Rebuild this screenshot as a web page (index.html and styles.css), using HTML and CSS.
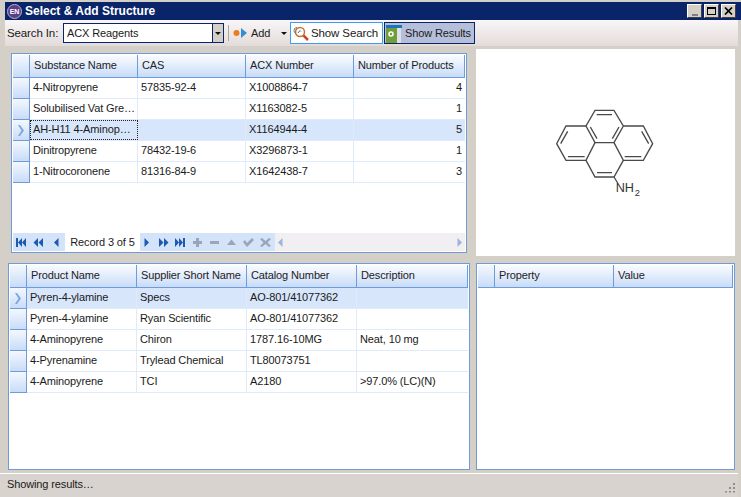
FILE: index.html
```html
<!DOCTYPE html>
<html lang="en">
<head>
<meta charset="UTF-8">
<title>Select &amp; Add Structure</title>
<link rel="stylesheet" href="styles.css">
</head>
<body>
<svg class="defs" width="0" height="0">
  <symbol id="first" viewBox="0 0 11 9"><path d="M1 0h2v9H1zM7 0v9L3 4.500zM11 0v9L7 4.500z"/></symbol>
  <symbol id="prevpage" viewBox="0 0 11 9"><path d="M5 0v9L.5 4.500zM10 0v9L5.500 4.500z"/></symbol>
  <symbol id="prev" viewBox="0 0 11 9"><path d="M7.500 0v9L3 4.500z"/></symbol>
  <symbol id="next" viewBox="0 0 11 9"><path d="M3.500 0v9L8 4.500z"/></symbol>
  <symbol id="nextpage" viewBox="0 0 11 9"><path d="M1 0v9l4.500-4.500zM6 0v9l4.500-4.500z"/></symbol>
  <symbol id="last" viewBox="0 0 11 9"><path d="M0 0v9l4-4.500zM4 0v9l4-4.500zM8 0h2v9H8z"/></symbol>
  <symbol id="plus" viewBox="0 0 11 9"><path d="M4 0h3v3h3v3H7v3H4V6H1V3h3z"/></symbol>
  <symbol id="minus" viewBox="0 0 11 9"><path d="M1 3h9v3H1z"/></symbol>
  <symbol id="up" viewBox="0 0 11 9"><path d="M5.500 1.500L10 7H1z"/></symbol>
  <symbol id="check" viewBox="0 0 11 9"><path d="M0 4l2-2 2 3 5-5 2 2-7 7z"/></symbol>
  <symbol id="cross" viewBox="0 0 11 9"><path d="M0 1l2-1 3.500 3L9 0l2 1-3.500 3.500L11 8l-2 1-3.500-3L2 9 0 8l3.500-3.500z"/></symbol>
  <symbol id="rowmark" viewBox="0 0 8 11"><path d="M1 0h2l4 5.500L3 11H1l3.500-5.500z"/></symbol>
</svg>

<div class="window">
  <div class="titlebar">
    <span class="app-icon">EN</span>
    <span class="title-text">Select &amp; Add Structure</span>
    <div class="caption-buttons">
      <span class="caption-btn"><i class="cap-min"></i></span>
      <span class="caption-btn"><i class="cap-max"></i></span>
      <span class="caption-btn cap-close">
        <svg width="9" height="8" viewBox="0 0 9 8"><path d="M1 0.500L8 7.500M8 0.500L1 7.500" stroke="#000" stroke-width="1.700"/></svg>
      </span>
    </div>
  </div>

  <div class="toolbar">
    <span class="search-label">Search In:</span>
    <div class="combo">
      <span class="combo-text">ACX Reagents</span>
      <span class="combo-arrow"><i class="arrow-down"></i></span>
    </div>
    <span class="tool-sep"></span>
    <div class="add-btn">
      <svg width="15" height="12" viewBox="0 0 15 12"><circle cx="3.500" cy="6" r="3" fill="#f07a20"/><path d="M8 1l6 5-6 5z" fill="#2f8fd8"/></svg>
      <span>Add</span>
      <i class="arrow-down add-arrow"></i>
    </div>
    <div class="tool-btn show-search">
      <svg width="17" height="18" viewBox="0 0 17 18"><circle cx="8" cy="8" r="4.500" fill="#fff" stroke="#c9702a" stroke-width="1.500"/><path d="M5 3.500A3 3 0 0 0 2 6.500A3 3 0 0 0 4 9.500" fill="none" stroke="#6d7d8a"/><path d="M11.500 11.500L16 16" stroke="#c9482a" stroke-width="2.500"/><path d="M6 9l2-2.500 1 1" fill="none" stroke="#3a6ea8"/></svg>
      <span>Show Search</span>
    </div>
    <div class="tool-btn show-results">
      <svg width="16" height="19" viewBox="0 0 16 19"><path d="M0 1h16v3H0z" fill="#1c74bc"/><path d="M0 4h11v15H0z" fill="#6f9e3a"/><path d="M11 4h4v15h-4z" fill="#dfe2ea"/><circle cx="5" cy="10" r="2" fill="none" stroke="#fff" stroke-width="1.500"/></svg>
      <span>Show Results</span>
    </div>
  </div>

  <div class="panes">
    <div class="pane pane-substances">
      <div class="grid grid-substances">
        <div class="row head">
          <span class="mark"></span><span class="cell">Substance Name</span><span class="cell">CAS</span><span class="cell">ACX Number</span><span class="cell">Number of Products</span>
        </div>
        <div class="row">
          <span class="mark"></span><span class="cell">4-Nitropyrene</span><span class="cell">57835-92-4</span><span class="cell">X1008864-7</span><span class="cell num">4</span>
        </div>
        <div class="row">
          <span class="mark"></span><span class="cell">Solubilised Vat Gre&hellip;</span><span class="cell"></span><span class="cell">X1163082-5</span><span class="cell num">1</span>
        </div>
        <div class="row selected">
          <span class="mark"><svg width="8" height="11"><use href="#rowmark"/></svg></span><span class="cell focused">AH-H11 4-Aminop&hellip;</span><span class="cell"></span><span class="cell">X1164944-4</span><span class="cell num">5</span>
        </div>
        <div class="row">
          <span class="mark"></span><span class="cell">Dinitropyrene</span><span class="cell">78432-19-6</span><span class="cell">X3296873-1</span><span class="cell num">1</span>
        </div>
        <div class="row">
          <span class="mark"></span><span class="cell">1-Nitrocoronene</span><span class="cell">81316-84-9</span><span class="cell">X1642438-7</span><span class="cell num">3</span>
        </div>
      </div>
      <div class="navigator">
        <div class="nav-group">
          <svg class="nav-icon"><use href="#first"/></svg>
          <svg class="nav-icon"><use href="#prevpage"/></svg>
          <svg class="nav-icon"><use href="#prev"/></svg>
        </div>
        <span class="nav-record">Record 3 of 5</span>
        <div class="nav-group nav-group-right">
          <svg class="nav-icon"><use href="#next"/></svg>
          <svg class="nav-icon"><use href="#nextpage"/></svg>
          <svg class="nav-icon"><use href="#last"/></svg>
          <svg class="nav-icon off"><use href="#plus"/></svg>
          <svg class="nav-icon off"><use href="#minus"/></svg>
          <svg class="nav-icon off"><use href="#up"/></svg>
          <svg class="nav-icon off"><use href="#check"/></svg>
          <svg class="nav-icon off"><use href="#cross"/></svg>
        </div>
        <div class="nav-scroll">
          <svg class="scroll-arrow" width="11" height="9"><use href="#prev"/></svg>
          <svg class="scroll-arrow" width="11" height="9"><use href="#next"/></svg>
        </div>
      </div>
    </div>

    <div class="pane-structure">
      <svg class="molecule" width="140" height="120" viewBox="0 0 420 360">
        <g fill="none" stroke="#4a4a4a" stroke-width="4">
          <path d="M195 58H252L280 105L252 155H195L168 105Z"/>
          <path d="M168 105H108L80 158L108 208H168L195 155"/>
          <path d="M280 105H340L368 158L340 208H280L252 155"/>
          <path d="M168 208L195 258H252L280 208"/>
          <path d="M252 258L263 276"/>
          <path d="M200 71H246M181 108L201 143M267 108L247 143M113 121L92 158M114 197H164M335 121L356 158M284 197H334M201 245H246"/>
        </g>
        <text class="mol-label" x="257" y="302">NH</text>
        <text class="mol-sub" x="314" y="314">2</text>
      </svg>
    </div>

    <div class="pane pane-products">
      <div class="grid grid-products">
        <div class="row head">
          <span class="mark"></span><span class="cell">Product Name</span><span class="cell">Supplier Short Name</span><span class="cell">Catalog Number</span><span class="cell">Description</span>
        </div>
        <div class="row selected">
          <span class="mark"><svg width="8" height="11"><use href="#rowmark"/></svg></span><span class="cell">Pyren-4-ylamine</span><span class="cell">Specs</span><span class="cell">AO-801/41077362</span><span class="cell"></span>
        </div>
        <div class="row">
          <span class="mark"></span><span class="cell">Pyren-4-ylamine</span><span class="cell">Ryan Scientific</span><span class="cell">AO-801/41077362</span><span class="cell"></span>
        </div>
        <div class="row">
          <span class="mark"></span><span class="cell">4-Aminopyrene</span><span class="cell">Chiron</span><span class="cell">1787.16-10MG</span><span class="cell">Neat, 10 mg</span>
        </div>
        <div class="row">
          <span class="mark"></span><span class="cell">4-Pyrenamine</span><span class="cell">Trylead Chemical</span><span class="cell">TL80073751</span><span class="cell"></span>
        </div>
        <div class="row">
          <span class="mark"></span><span class="cell">4-Aminopyrene</span><span class="cell">TCI</span><span class="cell">A2180</span><span class="cell">&gt;97.0% (LC)(N)</span>
        </div>
      </div>
    </div>

    <div class="pane pane-props">
      <div class="grid grid-props">
        <div class="row head">
          <span class="mark"></span><span class="cell">Property</span><span class="cell">Value</span>
        </div>
      </div>
    </div>
  </div>

  <div class="statusbar">
    <span>Showing results&hellip;</span>
    <span class="grip"></span>
  </div>
</div>
</body>
</html>
```

FILE: styles.css
```css
html, body {
    margin: 0;
    padding: 0;
}

body {
    width: 741px;
    height: 497px;
    overflow: hidden;
    background-color: #d4d0c8;
    font-family: "Liberation Sans", Tahoma, sans-serif;
    font-size: 11px;
    letter-spacing: -0.12px;
    color: #1a1a1a;
}

.defs {
    display: block;
    height: 0;
}

.window {
    height: 495px;
    margin-top: 2px;
    display: flex;
    flex-direction: column;
}

/* title bar */
.titlebar {
    height: 18px;
    margin-left: 5px;
    background-color: #0a246a;
    display: flex;
    align-items: center;
    flex: none;
}

.app-icon {
    width: 15px;
    height: 15px;
    margin: 0 3px 0 2px;
    border-radius: 50%;
    background-color: #5b3f86;
    border: 1px solid #b8b0cc;
    box-sizing: border-box;
    color: #fff;
    font-size: 7px;
    font-weight: bold;
    line-height: 13px;
    text-align: center;
}

.title-text {
    font-weight: bold;
    font-size: 12px;
    letter-spacing: 0;
    color: #fff;
}

.caption-buttons {
    margin-left: auto;
    margin-right: 5px;
    display: flex;
    gap: 2px;
}

.caption-btn {
    width: 15px;
    height: 14px;
    background-color: #d4d0c8;
    border: 1px solid;
    border-color: #fff #404040 #404040 #fff;
    box-sizing: border-box;
    display: flex;
    align-items: center;
    justify-content: center;
    color: #000;
}

.cap-min {
    width: 6px;
    height: 2px;
    background-color: #808080;
    margin-top: 7px;
}

.cap-max {
    width: 9px;
    height: 8px;
    border: 1px solid #000;
    border-top-width: 2px;
    box-sizing: border-box;
}

/* toolbar */
.toolbar {
    height: 26px;
    margin-left: 5px;
    margin-right: 3px;
    background: linear-gradient(#f9f6f8, #e3dbd9);
    display: flex;
    align-items: center;
    flex: none;
}

.search-label {
    margin-left: 2px;
    width: 56px;
    font-size: 11.5px;
}

.combo {
    width: 161px;
    height: 20px;
    border: 1px solid #0a246a;
    box-sizing: border-box;
    background-color: #fff;
    display: flex;
    align-items: center;
}

.combo-text {
    flex: 1;
    padding-left: 3px;
}

.combo-arrow {
    width: 10px;
    height: 18px;
    background-color: #d4d0c8;
    border-left: 1px solid #0a246a;
    display: flex;
    align-items: center;
    justify-content: center;
}

.arrow-down {
    width: 0;
    height: 0;
    border-left: 3px solid transparent;
    border-right: 3px solid transparent;
    border-top: 3px solid #111;
}

.tool-sep {
    width: 1px;
    height: 16px;
    margin-left: 4px;
    background-color: #a9a6a4;
}

.add-btn {
    width: 57px;
    margin-left: 4px;
    display: flex;
    align-items: center;
    gap: 3px;
}

.add-arrow {
    margin-left: auto;
    margin-right: 3px;
}

.tool-btn {
    height: 22px;
    box-sizing: border-box;
    display: flex;
    align-items: center;
    gap: 2px;
    white-space: nowrap;
}

.show-search {
    width: 93px;
    padding-left: 1px;
    border: 1px solid #3f9cf0;
    background-color: #fff;
    font-size: 11.5px;
}

.show-results {
    width: 91px;
    margin-left: 1px;
    padding-left: 1px;
    border: 1px solid #0a246a;
    background-color: #b5bfd9;
    gap: 3px;
}

/* panes */
.panes {
    flex: 1;
    display: grid;
    grid-template-columns: 462px 259px;
    grid-template-rows: 207px 207px;
    column-gap: 6px;
    row-gap: 7px;
    padding: 3px 0 0 8px;
}

.pane {
    background-color: #fff;
    border: 1px solid #6f9bd8;
    box-sizing: border-box;
    display: flex;
    flex-direction: column;
    padding: 1px;
}

.pane-substances {
    margin: 4px 3px 3px 3px;
}

.pane-structure {
    background-color: #fff;
    display: flex;
    align-items: center;
    justify-content: center;
    padding: 0 11px 4px 0;
}

.mol-label {
    font-family: "Liberation Sans", sans-serif;
    font-size: 38px;
    fill: #333;
}

.mol-sub {
    font-family: "Liberation Sans", sans-serif;
    font-size: 28px;
    fill: #333;
}

/* grids */
.grid {
    flex: 1;
}

.row {
    display: grid;
    height: 20px;
    border-bottom: 1px solid #dfeafb;
}

.grid-substances .row {
    grid-template-columns: 17px 108px 108px 108px 1fr;
}

.grid-products .row {
    grid-template-columns: 17px 110px 110px 110px 1fr;
}

.grid-props .row {
    grid-template-columns: 17px 119px 1fr;
}

.mark {
    background: linear-gradient(#f4f8fe, #c8dcf8);
    border-right: 1px solid #6f9bd8;
    border-bottom: 1px solid #6f9bd8;
    margin-bottom: -1px;
    display: flex;
    align-items: center;
    justify-content: center;
}

.mark svg {
    fill: #7ba7e0;
}

.cell {
    padding: 0 3px;
    line-height: 19px;
    border-right: 1px solid #dfeafb;
    white-space: nowrap;
    overflow: hidden;
}

.cell:last-child {
    border-right: none;
}

.num {
    text-align: right;
}

.selected {
    background-color: #d7e6fb;
}

.focused {
    outline: 1px dotted #222;
    outline-offset: -1px;
}

.row.head {
    height: 22px;
    background: linear-gradient(#fafcff, #c8dcf8);
    border-bottom: 1px solid #6f9bd8;
}

.head .cell {
    padding-left: 4px;
    line-height: 21px;
    border-right: 1px solid #6f9bd8;
    color: #222;
}

/* navigator */
.navigator {
    height: 18px;
    display: flex;
    align-items: stretch;
    flex: none;
}

.nav-group {
    background-color: #d3e3fa;
    display: flex;
    align-items: center;
    gap: 7px;
    padding: 0 3px 0 2px;
}

.nav-group-right {
    gap: 6px;
    padding: 0 4px 0 1px;
}

.nav-icon {
    width: 11px;
    height: 9px;
    fill: #1e5ab0;
}

.nav-icon.off {
    fill: #9aa6b8;
}

.nav-record {
    width: 75px;
    text-align: center;
    line-height: 18px;
    background-color: #fff;
}

.nav-scroll {
    flex: 1;
    background-color: #f1eff2;
    display: flex;
    align-items: center;
    justify-content: space-between;
}

.scroll-arrow {
    fill: #9db4dc;
}

/* status bar */
.statusbar {
    height: 24px;
    margin-top: 3px;
    margin-right: 3px;
    background-color: #d8d3ce;
    border-top: 1px solid #fff;
    box-sizing: border-box;
    display: flex;
    align-items: center;
    justify-content: space-between;
    padding: 0 3px 3px 7px;
    flex: none;
}

.grip {
    width: 11px;
    height: 11px;
    margin-top: 6px;
    background-image: radial-gradient(#8f8b86 1px, transparent 1.2px);
    background-size: 4px 4px;
    clip-path: polygon(100% 0, 100% 100%, 0 100%);
}
```
